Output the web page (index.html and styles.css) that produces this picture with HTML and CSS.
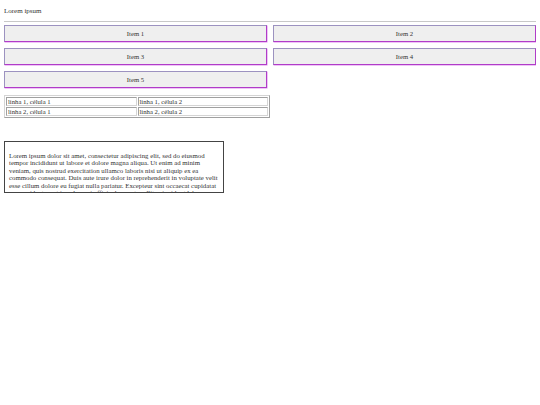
FILE: index.html
```html
<!DOCTYPE html>
<html lang="pt">
<head>
<meta charset="utf-8">
<title>Lorem ipsum</title>
<link rel="stylesheet" href="styles.css">
</head>
<body>
<p class="title">Lorem ipsum</p>
<hr class="rule">
<div class="items">
  <button class="item">Item 1</button>
  <button class="item">Item 2</button>
  <button class="item">Item 3</button>
  <button class="item">Item 4</button>
  <button class="item">Item 5</button>
</div>
<table class="grid-table">
  <tr><td>linha 1, célula 1</td><td>linha 1, célula 2</td></tr>
  <tr><td>linha 2, célula 1</td><td>linha 2, célula 2</td></tr>
</table>
<div class="textbox">
  <p>Lorem ipsum dolor sit amet, consectetur adipiscing elit, sed do eiusmod tempor incididunt ut labore et dolore magna aliqua. Ut enim ad minim veniam, quis nostrud exercitation ullamco laboris nisi ut aliquip ex ea commodo consequat. Duis aute irure dolor in reprehenderit in voluptate velit esse cillum dolore eu fugiat nulla pariatur. Excepteur sint occaecat cupidatat non proident, sunt in culpa qui officia deserunt mollit anim id est laborum.</p>
</div>
</body>
</html>
```
FILE: styles.css
```css
html, body {
  background: #ffffff;
}
body {
  margin: 4px;
  font-family: "Liberation Serif", "Times New Roman", serif;
  font-size: 7px;
  color: #333333;
}
.title {
  margin: 3px 0 0;
  line-height: 8px;
}
.rule {
  margin: 6px 0 3px;
  border: 0;
  border-top: 1px solid #c8c8c8;
  height: 0;
}
.items {
  display: grid;
  grid-template-columns: 1fr 1fr;
  grid-auto-rows: 17px;
  column-gap: 6px;
  row-gap: 6px;
}
.item {
  height: 17px;
  margin: 0;
  padding: 0;
  font-family: "Liberation Serif", "Times New Roman", serif;
  font-size: 6.7px;
  color: #333333;
  background: #efefef;
  border-style: solid;
  border-width: 1px 1.5px 1.5px 1px;
  border-color: #9c92c0 #b03cc8 #b03cc8 #9c92c0;
  box-shadow: 0.5px 0.5px 0 #e08af0;
}
.grid-table {
  margin-top: 7px;
  width: 50%;
  border-collapse: separate;
  border-spacing: 1px;
  border: 1px solid;
  border-color: #d4d4d4 #a0a0a0 #a0a0a0 #d4d4d4;
  font-size: 6.7px;
}
.grid-table td {
  padding: 0 1px;
  height: 7px;
  line-height: 7px;
  border: 1px solid;
  border-color: #a0a0a0 #d4d4d4 #d4d4d4 #a0a0a0;
}
.textbox {
  margin-top: 23px;
  width: 220px;
  height: 52px;
  box-sizing: border-box;
  border: 1px solid #444444;
  padding: 10px 4px 0;
  overflow: hidden;
}
.textbox p {
  margin: 0;
  font-size: 6.8px;
  line-height: 7.4px;
}
```
